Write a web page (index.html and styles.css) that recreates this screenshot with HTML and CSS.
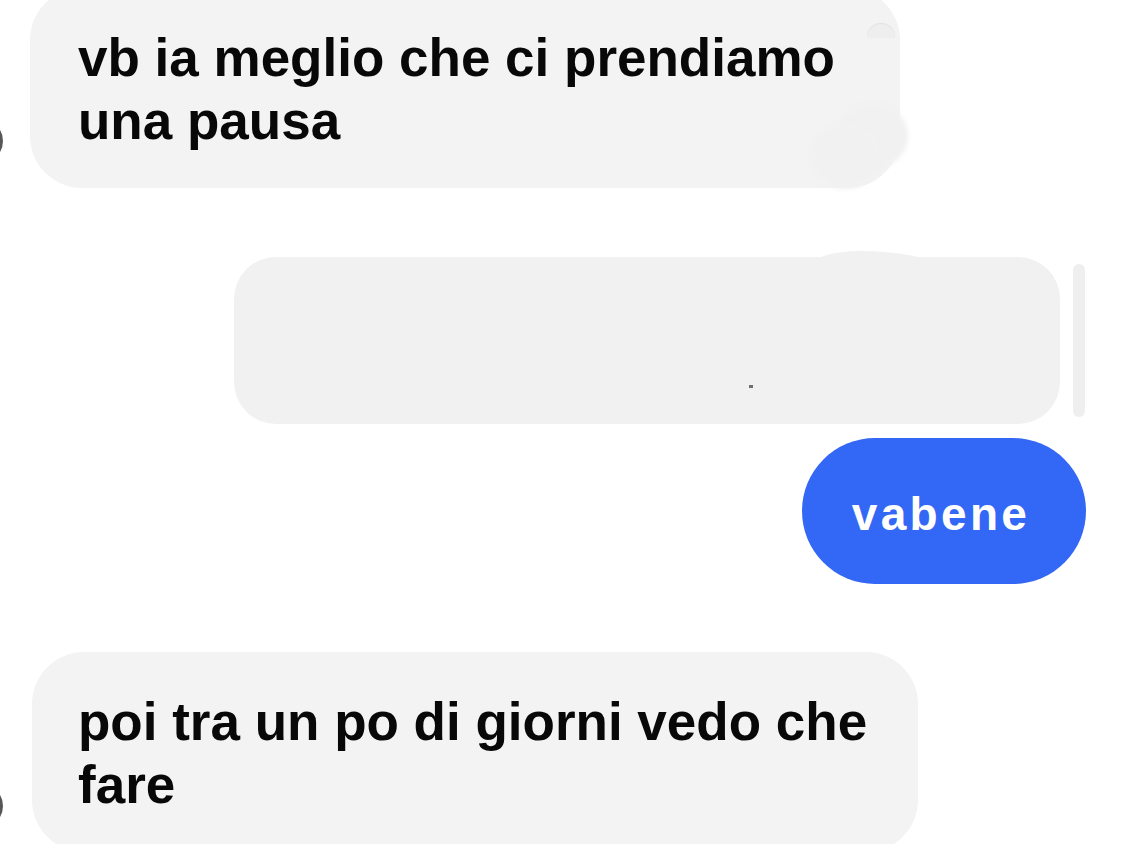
FILE: index.html
```html
<!DOCTYPE html>
<html lang="it">
<head>
<meta charset="utf-8">
<title>Chat</title>
<link rel="stylesheet" href="styles.css">
</head>
<body>
<main class="chat">
  <div class="row row-in row-first">
    <span class="avatar"></span>
    <div class="bubble bubble-in bubble-a">
      <p class="msg">vb ia meglio che ci prendiamo<br>una pausa</p>
      <span class="smudge smudge-dome"></span>
      <span class="smudge smudge-blob"></span>
      <span class="smudge smudge-blob2"></span>
    </div>
  </div>

  <div class="row row-out row-redacted">
    <div class="bubble bubble-blank">
      <span class="bump"></span>
      <span class="speck"></span>
    </div>
    <span class="scrollbar"></span>
  </div>

  <div class="row row-out row-blue">
    <div class="bubble bubble-blue"><p class="msg msg-out">vabene</p></div>
  </div>

  <div class="row row-in row-last">
    <span class="avatar avatar-low"></span>
    <div class="bubble bubble-in bubble-c">
      <p class="msg">poi tra un po di giorni vedo che<br>fare</p>
    </div>
  </div>
</main>
</body>
</html>
```

FILE: styles.css
```css
* { box-sizing: border-box; }
html, body {
  margin: 0;
  padding: 0;
  background: #ffffff;
  width: 1126px;
  height: 844px;
  overflow: hidden;
}
.chat {
  display: flex;
  flex-direction: column;
  font-family: "Liberation Sans", Arial, sans-serif;
}
.row {
  display: flex;
  align-items: flex-end;
  position: relative;
}
.row-in { padding-left: 30px; }
.row-first { margin-top: -12px; }
.row-out { justify-content: flex-end; }
.row-redacted {
  margin-top: 69px;
  padding-right: 41px;
  align-items: center;
  gap: 13px;
}
.row-blue {
  margin-top: 14px;
  padding-right: 40px;
}
.row-last {
  margin-top: 68px;
  padding-left: 32px;
}
.avatar {
  position: absolute;
  left: -41px;
  width: 44px;
  height: 44px;
  border-radius: 50%;
  border: 3px solid #3a3a3a;
  top: 131px;
  opacity: 0.85;
}
.avatar-low { top: 132px; }
.bubble {
  position: relative;
  border-radius: 52px;
}
.bubble-in {
  background: #f3f3f3;
  padding: 38px 40px 36px 48px;
}
.bubble-a { width: 870px; }
.bubble-c { width: 886px; padding-left: 46px; }
.msg {
  margin: 0;
  font-size: 53px;
  line-height: 63px;
  font-weight: 700;
  color: #080808;
  letter-spacing: 0;
  white-space: nowrap;
}
.bubble-blank {
  width: 826px;
  height: 167px;
  background: #f1f1f1;
  border-radius: 42px;
}
.scrollbar {
  width: 12px;
  height: 153px;
  background: #efefef;
  border-radius: 6px;
}
.bubble-blue {
  width: 284px;
  height: 146px;
  background: #3367f5;
  border-radius: 73px;
  display: flex;
  align-items: center;
  justify-content: center;
}
.msg-out {
  color: #ffffff;
  font-size: 46px;
  line-height: 52px;
  letter-spacing: 3.3px;
  padding-right: 6px;
  padding-top: 6px;
}
.smudge {
  position: absolute;
  pointer-events: none;
}
.smudge-dome {
  right: 5px;
  top: 36px;
  width: 28px;
  height: 14px;
  border-radius: 14px 14px 0 0;
  background: #eeeeee;
  box-shadow: 0 -1px 1px rgba(0,0,0,0.08);
}
.smudge-blob {
  right: -8px;
  top: 115px;
  width: 70px;
  height: 66px;
  border-radius: 50%;
  background: #f1f1f1;
  filter: blur(2px);
}
.smudge-blob2 {
  right: 20px;
  top: 135px;
  width: 70px;
  height: 66px;
  border-radius: 50%;
  background: #f1f1f1;
  filter: blur(2px);
}
.bump {
  position: absolute;
  left: 576px;
  top: -6px;
  width: 124px;
  height: 16px;
  border-radius: 40% 60% 0 0 / 100% 100% 0 0;
  background: #f1f1f1;
}
.speck {
  position: absolute;
  left: 515px;
  top: 128px;
  width: 4px;
  height: 3px;
  background: #6f6f6f;
}
```
